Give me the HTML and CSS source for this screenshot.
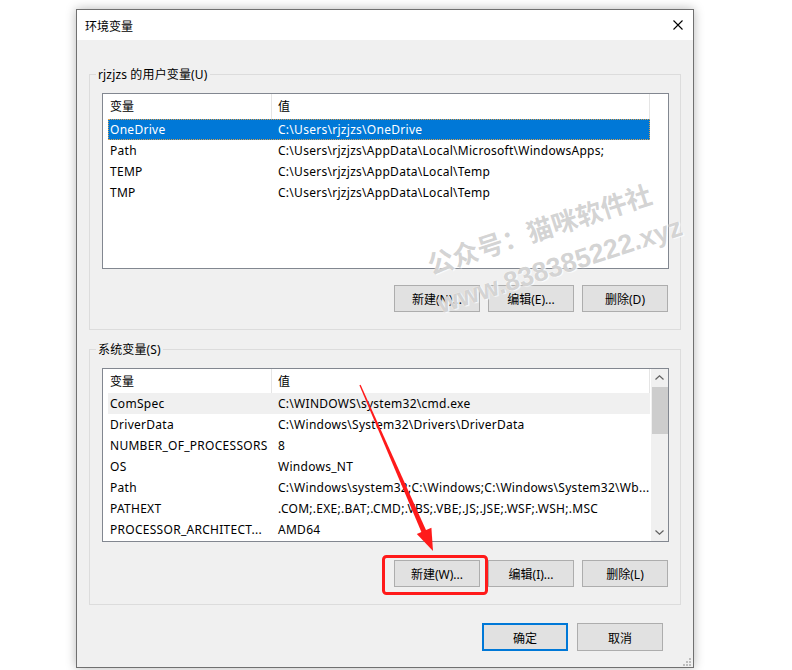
FILE: index.html
```html
<!DOCTYPE html>
<html lang="zh-CN">
<head>
<meta charset="utf-8">
<title>环境变量</title>
<link rel="stylesheet" href="styles.css">
</head>
<body>
<div class="window">
  <div class="titlebar">
    <span class="title">环境变量</span>
    <svg class="close" width="10" height="10" viewBox="0 0 10 10"><path d="M0.5 0.5 L9.5 9.5 M9.5 0.5 L0.5 9.5" stroke="#000" stroke-width="1.1" fill="none"/></svg>
  </div>
  <div class="body">
    <div class="group">
      <div class="legend">rjzjzs 的用户变量(U)</div>
      <div class="list list-user">
        <div class="list-main">
          <div class="row head head-user"><div class="c1">变量</div><div class="c2">值</div></div>
          <div class="row sel"><div class="c1">OneDrive</div><div class="c2">C:\Users\rjzjzs\OneDrive</div></div>
          <div class="row"><div class="c1">Path</div><div class="c2">C:\Users\rjzjzs\AppData\Local\Microsoft\WindowsApps;</div></div>
          <div class="row"><div class="c1">TEMP</div><div class="c2">C:\Users\rjzjzs\AppData\Local\Temp</div></div>
          <div class="row"><div class="c1">TMP</div><div class="c2">C:\Users\rjzjzs\AppData\Local\Temp</div></div>
        </div>
      </div>
      <div class="btns">
        <button class="btn">新建(N)...</button>
        <button class="btn">编辑(E)...</button>
        <button class="btn">删除(D)</button>
      </div>
    </div>

    <div class="group group-sys">
      <div class="legend">系统变量(S)</div>
      <div class="list list-sys">
        <div class="list-main">
          <div class="row head"><div class="c1">变量</div><div class="c2">值</div></div>
          <div class="row hover"><div class="c1">ComSpec</div><div class="c2">C:\WINDOWS\system32\cmd.exe</div></div>
          <div class="row"><div class="c1">DriverData</div><div class="c2">C:\Windows\System32\Drivers\DriverData</div></div>
          <div class="row"><div class="c1">NUMBER_OF_PROCESSORS</div><div class="c2">8</div></div>
          <div class="row"><div class="c1">OS</div><div class="c2">Windows_NT</div></div>
          <div class="row"><div class="c1">Path</div><div class="c2">C:\Windows\system32;C:\Windows;C:\Windows\System32\Wb...</div></div>
          <div class="row"><div class="c1">PATHEXT</div><div class="c2">.COM;.EXE;.BAT;.CMD;.VBS;.VBE;.JS;.JSE;.WSF;.WSH;.MSC</div></div>
          <div class="row"><div class="c1">PROCESSOR_ARCHITECT...</div><div class="c2">AMD64</div></div>
        </div>
        <div class="scrollbar">
          <div class="sb-btn"><svg width="9" height="5" viewBox="0 0 9 5"><path d="M0.5 4.5 L4.5 0.8 L8.5 4.5" stroke="#606060" stroke-width="1.2" fill="none"/></svg></div>
          <div class="sb-track"><div class="sb-thumb"></div></div>
          <div class="sb-btn"><svg width="9" height="5" viewBox="0 0 9 5"><path d="M0.5 0.5 L4.5 4.2 L8.5 0.5" stroke="#606060" stroke-width="1.2" fill="none"/></svg></div>
        </div>
      </div>
      <div class="btns btns-sys">
        <button class="btn">新建(W)...</button>
        <button class="btn">编辑(I)...</button>
        <button class="btn">删除(L)</button>
      </div>
    </div>

    <div class="footer">
      <button class="btn btn-default">确定</button>
      <button class="btn">取消</button>
    </div>
    <svg class="grip" width="8" height="8" viewBox="0 0 8 8">
      <rect x="6" y="0" width="2" height="2" fill="#bdbdbd"/>
      <rect x="3" y="3" width="2" height="2" fill="#bdbdbd"/>
      <rect x="6" y="3" width="2" height="2" fill="#bdbdbd"/>
      <rect x="0" y="6" width="2" height="2" fill="#bdbdbd"/>
      <rect x="3" y="6" width="2" height="2" fill="#bdbdbd"/>
      <rect x="6" y="6" width="2" height="2" fill="#bdbdbd"/>
    </svg>
  </div>
</div>

<div class="wm wm1">公众号：猫咪软件社</div>
<div class="wm wm2">www.838385222.xyz</div>

<svg class="annot" width="792" height="670" viewBox="0 0 792 670">
  <rect x="383.5" y="556.5" width="103" height="37" rx="3" ry="3" fill="none" stroke="#ff1a1a" stroke-width="3"/>
  <polygon points="360.6,384.7 359.4,385.3 421.8,533 426.4,531" fill="#ff1a1a"/>
  <polygon points="433,551 431.4,527.7 416.8,534.1" fill="#ff1a1a"/>
</svg>
</body>
</html>
```

FILE: styles.css
```css
html, body {
  margin: 0;
  padding: 0;
  background: #ffffff;
}
body {
  width: 792px;
  height: 670px;
  overflow: hidden;
  font-family: "Noto Sans", "Noto Sans CJK SC", sans-serif;
  font-size: 12px;
  color: #000;
}
.window {
  margin: 9px 0 0 76px;
  width: 618px;
  height: 659px;
  box-sizing: border-box;
  border: 1px solid #707070;
  background: #f0f0f0;
  box-shadow: 0 0 10px rgba(0, 0, 0, 0.28);
  display: flex;
  flex-direction: column;
}
.titlebar {
  height: 30px;
  background: #fff;
  display: flex;
  align-items: center;
  justify-content: space-between;
  padding: 0 10px 0 8px;
  flex: none;
}
.title {
  font-family: "Noto Sans CJK SC", sans-serif;
  font-size: 12px;
  line-height: 16px;
  padding-top: 1px;
}
.close { display: block; }
.body {
  flex: 1;
  padding-top: 34px;
  position: relative;
}
.group {
  margin: 0 12px;
  border: 1px solid #dcdcdc;
  padding: 0 11px 17px 12px;
}
.group-sys { margin-top: 19px; }
.legend {
  width: fit-content;
  margin: -9px 0 0 -6px;
  padding: 1px 2px 0;
  line-height: 16px;
  height: 15px;
  background: #f0f0f0;
  white-space: nowrap;
  letter-spacing: 0.15px;
}
.list {
  margin-top: 11px;
  border: 1px solid #828790;
  background: #fff;
  box-sizing: border-box;
  display: flex;
  padding-left: 5px;
  overflow: hidden;
}
.list-user { height: 176px; }
.list-sys { height: 174px; }
.list-main {
  width: 542px;
  flex: none;
}
.row {
  display: flex;
  height: 21px;
  line-height: 22px;
  white-space: nowrap;
  letter-spacing: 0.28px;
}
.row .c1 {
  width: 163px;
  padding-left: 2px;
  box-sizing: border-box;
  overflow: hidden;
  flex: none;
}
.row .c2 {
  flex: 1;
  padding-left: 7px;
  overflow: hidden;
}
.head {
  height: 24px;
  line-height: 25px;
  border-right: 1px solid #e5e5e5;
  box-sizing: border-box;
  letter-spacing: 0;
}
.head-user { height: 25px; line-height: 26px; }
.head .c2 {
  border-left: 1px solid #e5e5e5;
  padding-left: 6px;
}
.sel {
  background: #0078d7;
  color: #fff;
  outline: 1px dotted #d9a050;
  outline-offset: -1px;
}
.hover { background: #f0f0f0; }
.scrollbar {
  margin-left: auto;
  width: 17px;
  background: #f0f0f0;
  display: flex;
  flex-direction: column;
  flex: none;
}
.sb-btn {
  height: 17px;
  display: flex;
  align-items: center;
  justify-content: center;
  flex: none;
}
.sb-track {
  flex: 1;
  padding-top: 1px;
}
.sb-thumb {
  height: 47px;
  background: #cdcdcd;
  margin: 0 0 0 1px;
}
.btns {
  display: flex;
  justify-content: flex-end;
  gap: 8px;
  margin-top: 16px;
  margin-right: 1px;
}
.btns-sys { margin-top: 18px; }
.btn {
  width: 86px;
  height: 27px;
  box-sizing: border-box;
  background: #e1e1e1;
  border: 1px solid #adadad;
  border-radius: 0;
  font-family: "Noto Sans", "Noto Sans CJK SC", sans-serif;
  font-size: 12px;
  color: #000;
  padding: 1px 0 0;
  margin: 0;
}
.btn-default {
  border: 2px solid #0078d7;
}
.footer {
  display: flex;
  justify-content: flex-end;
  gap: 9px;
  margin: 18px 30px 0 0;
}
.footer .btn { height: 28px; }
.grip {
  position: absolute;
  right: 2px;
  bottom: 1px;
}
.wm {
  position: absolute;
  transform: translate(-50%, -50%) rotate(-18deg);
  white-space: nowrap;
  font-weight: bold;
  color: rgba(150, 150, 150, 0.42);
  text-shadow: 0 0 1px #fff, 1px 1px 1px rgba(255, 255, 255, 0.8);
  pointer-events: none;
}
.wm1 {
  left: 539px;
  top: 228px;
  font-family: "Noto Sans CJK SC", sans-serif;
  font-size: 26px;
  letter-spacing: 0;
}
.wm2 {
  left: 560px;
  top: 266px;
  font-family: "Liberation Sans", sans-serif;
  font-size: 27px;
}
.annot {
  position: absolute;
  left: 0;
  top: 0;
  pointer-events: none;
}
```
